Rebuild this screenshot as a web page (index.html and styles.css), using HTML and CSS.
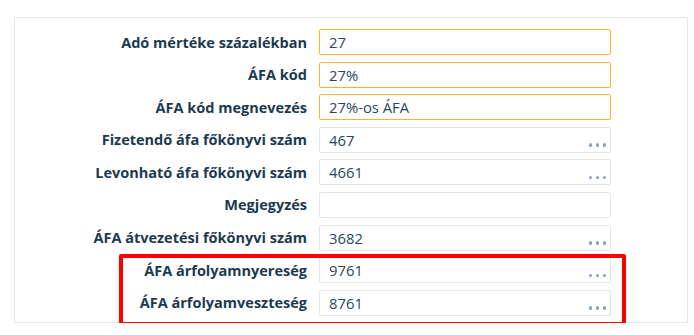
FILE: index.html
```html
<!DOCTYPE html>
<html lang="hu">
<head>
<meta charset="utf-8">
<link rel="stylesheet" href="styles.css">
</head>
<body>
<div class="panel">
  <div class="form">
    <label class="lbl">Adó mértéke százalékban</label>
    <div class="field req"><span class="val">27</span></div>

    <label class="lbl">ÁFA kód</label>
    <div class="field req"><span class="val">27%</span></div>

    <label class="lbl">ÁFA kód megnevezés</label>
    <div class="field req"><span class="val">27%-os ÁFA</span></div>

    <label class="lbl">Fizetendő áfa főkönyvi szám</label>
    <div class="field"><span class="val">467</span><span class="dots"><i></i><i></i><i></i></span></div>

    <label class="lbl">Levonható áfa főkönyvi szám</label>
    <div class="field"><span class="val">4661</span><span class="dots"><i></i><i></i><i></i></span></div>

    <label class="lbl">Megjegyzés</label>
    <div class="field"><span class="val"></span></div>

    <label class="lbl">ÁFA átvezetési főkönyvi szám</label>
    <div class="field"><span class="val">3682</span><span class="dots"><i></i><i></i><i></i></span></div>

    <label class="lbl">ÁFA árfolyamnyereség</label>
    <div class="field"><span class="val">9761</span><span class="dots"><i></i><i></i><i></i></span></div>

    <label class="lbl">ÁFA árfolyamveszteség</label>
    <div class="field"><span class="val">8761</span><span class="dots"><i></i><i></i><i></i></span></div>
  </div>
  <div class="highlight"></div>
</div>
</body>
</html>
```

FILE: styles.css
```css
html, body {
  margin: 0;
  padding: 0;
  background: #ffffff;
}

body {
  font-family: "Open Sans", "Noto Sans", sans-serif;
  padding: 17px 6px 0 14px;
}

.panel {
  position: relative;
  width: 672px;
  height: 304px;
  border: 1px solid #e3e8ec;
  background: #ffffff;
}

.form {
  display: grid;
  grid-template-columns: 292px 292px;
  grid-auto-rows: 26px;
  column-gap: 12px;
  row-gap: 6.6px;
  padding-top: 11px;
}

.lbl {
  justify-self: end;
  align-self: center;
  font-size: 14.5px;
  font-weight: 700;
  color: #1b3a50;
  white-space: nowrap;
}

.field {
  position: relative;
  box-sizing: border-box;
  border: 1px solid #e1e6ea;
  border-radius: 2px;
  background: #fff;
  display: flex;
  align-items: center;
  padding-left: 9px;
}

.field.req {
  border-color: #f5b530;
}

.val {
  font-size: 14.8px;
  color: #2a465c;
}

.dots {
  position: absolute;
  right: 4px;
  bottom: 5px;
  display: flex;
  gap: 3.5px;
}

.dots i {
  width: 3.5px;
  height: 3.5px;
  border-radius: 50%;
  background: #8aa0b8;
}

.highlight {
  position: absolute;
  left: 104px;
  top: 236px;
  width: 499px;
  height: 64px;
  border: 4px solid #ff0000;
  border-radius: 2px;
}
```
